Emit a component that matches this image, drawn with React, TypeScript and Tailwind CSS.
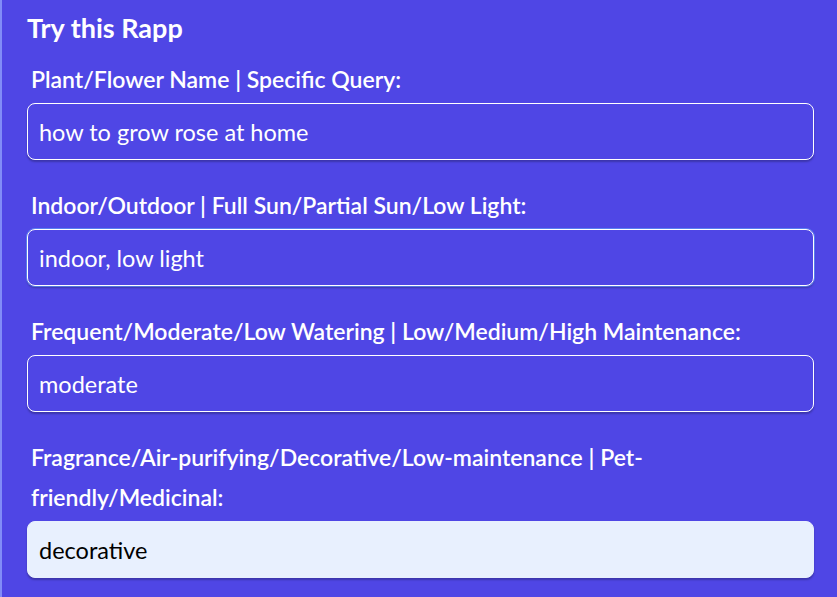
import { useState } from 'react';

const fields = [
  { label: 'Plant/Flower Name | Specific Query:', value: 'how to grow rose at home' },
  { label: 'Indoor/Outdoor | Full Sun/Partial Sun/Low Light:', value: 'indoor, low light' },
  { label: 'Frequent/Moderate/Low Watering | Low/Medium/High Maintenance:', value: 'moderate' },
  {
    label: 'Fragrance/Air-purifying/Decorative/Low-maintenance | Pet-friendly/Medicinal:',
    value: 'decorative',
    filled: true,
  },
];

export default function App() {
  const [values, setValues] = useState(fields.map((f) => f.value));

  return (
    <div
      className="h-[597px] w-[837px] overflow-hidden bg-[#4f46e5] border-l-2 border-[#818cf8] pl-[25px] pr-[23px] pt-[12px]"
      style={{ fontFamily: 'Lato, "Noto Sans", sans-serif' }}
    >
      <h2 className="text-[27px] leading-[32px] font-bold text-white">Try this Rapp</h2>

      <div className="mt-[15px] flex flex-col gap-[25px]">
        {fields.map((f, i) => (
          <div key={i}>
            <label className="block px-[4px] text-[23px] leading-[40px] font-semibold text-white">
              {f.label}
            </label>
            <input
              type="text"
              value={values[i]}
              onChange={(e) => {
                const next = [...values];
                next[i] = e.target.value;
                setValues(next);
              }}
              className={`mt-[4px] block h-[57px] w-full rounded-[8px] px-[11px] text-[23.5px] outline-none shadow-[0_2px_2px_rgba(0,0,0,0.25)] ${
                f.filled
                  ? 'bg-[#e8f0fe] text-black border border-[#e8f0fe]'
                  : 'bg-transparent text-white border border-white'
              } ${i === 1 ? 'ring-1 ring-[#60a5fa]/60' : ''}`}
            />
          </div>
        ))}
      </div>
    </div>
  );
}
